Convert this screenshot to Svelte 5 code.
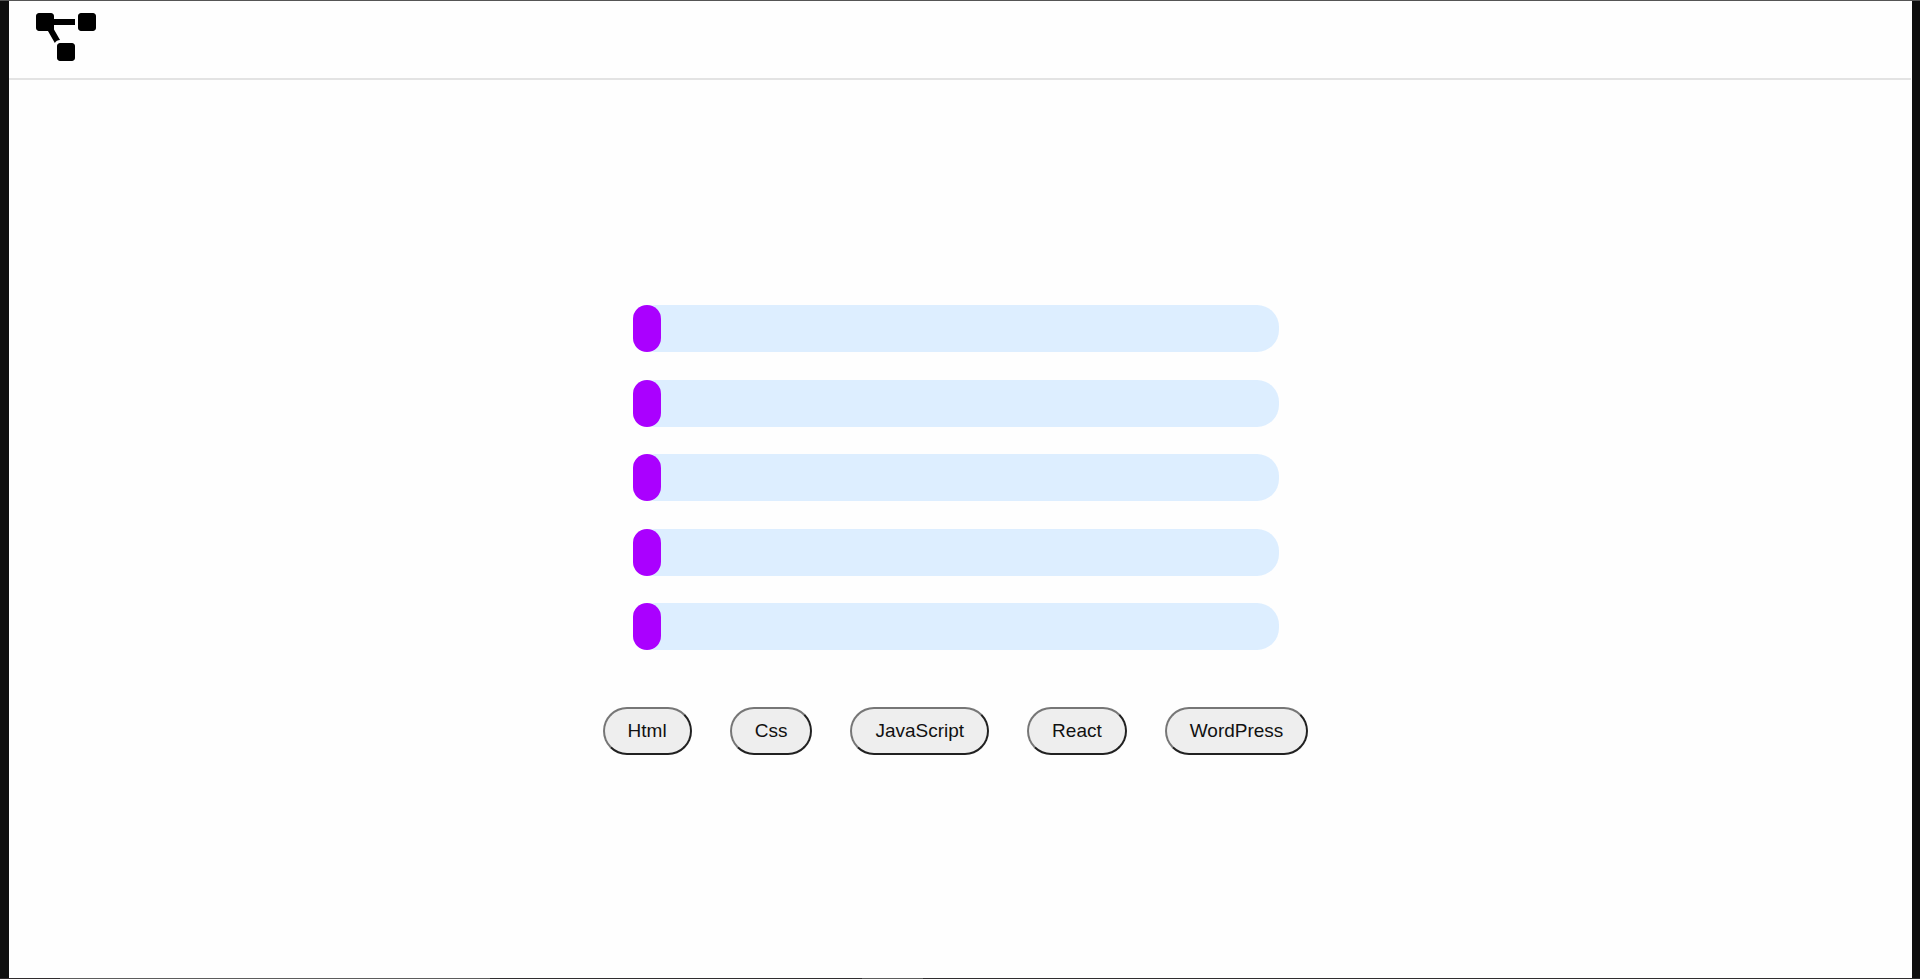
<script>
  const skills = $state([
    { name: 'Html', level: 0 },
    { name: 'Css', level: 0 },
    { name: 'JavaScript', level: 0 },
    { name: 'React', level: 0 },
    { name: 'WordPress', level: 0 }
  ]);

  function advance(skill) {
    skill.level = skill.level >= 100 ? 0 : skill.level + 20;
  }
</script>

<div class="page">
  <header>
    <a class="logo" href="/" aria-label="Home">
      <svg viewBox="0 0 640 512" aria-hidden="true">
        <path d="M384 320H256c-17.67 0-32 14.33-32 32v128c0 17.67 14.33 32 32 32h128c17.67 0 32-14.33 32-32V352c0-17.67-14.33-32-32-32zM192 32c0-17.67-14.33-32-32-32H32C14.33 0 0 14.33 0 32v128c0 17.67 14.33 32 32 32h95.72l73.16 128.04C211.98 300.98 232.4 288 256 288h.28L192 175.51V128h224V64H192V32zM608 0H480c-17.67 0-32 14.33-32 32v128c0 17.67 14.33 32 32 32h128c17.67 0 32-14.33 32-32V32c0-17.67-14.33-32-32-32z" />
      </svg>
    </a>
  </header>

  <main>
    <div class="bars">
      {#each skills as skill}
        <div
          class="track"
          role="progressbar"
          aria-label={skill.name}
          aria-valuemin="0"
          aria-valuemax="100"
          aria-valuenow={skill.level}
        >
          <div class="fill" style="width: {skill.level}%"></div>
        </div>
      {/each}
    </div>

    <div class="buttons">
      {#each skills as skill}
        <button type="button" onclick={() => advance(skill)}>{skill.name}</button>
      {/each}
    </div>
  </main>
</div>

<style>
  :global(body) {
    background: #fefefe;
  }

  .page {
    box-sizing: border-box;
    min-height: 100vh;
    display: flex;
    flex-direction: column;
    padding: 1px 8px 1px 9px;
    background:
      linear-gradient(#555, #555) top / 100% 1px no-repeat,
      linear-gradient(90deg, #2f2b2d 60px, #5b5b5b 60px 490px, #2f2d2f 490px 862px, #5b5b5b 862px 923px, #2f2d2f 923px) bottom / 100% 1px no-repeat,
      linear-gradient(#0f0f0f, #0f0f0f) left / 9px 100% no-repeat,
      linear-gradient(#0f0f0f, #0f0f0f) right / 8px 100% no-repeat,
      #fefefe;
    font-family: "Liberation Sans", Arial, sans-serif;
  }

  header {
    padding: 12px 27px 17px;
    margin-right: 1px;
    border-bottom: 2px solid #e3e3e3;
  }

  .logo {
    display: block;
    width: 60px;
    height: 48px;
    color: #000;
  }

  .logo svg {
    display: block;
    width: 100%;
    height: 100%;
    fill: currentColor;
  }

  main {
    flex: 1;
    display: flex;
    flex-direction: column;
    align-items: center;
    justify-content: center;
    gap: 57px;
    padding: 2px 10px 0 0;
  }

  .bars {
    width: 646px;
    max-width: 100%;
    height: 345px;
    display: flex;
    flex-direction: column;
    justify-content: space-between;
  }

  .track {
    height: 47px;
    border-radius: 22px;
    background: #ddeeff;
  }

  .fill {
    min-width: 28px;
    height: 100%;
    border-radius: 14px;
    background: #aa00ff;
    transition: width 0.4s;
  }

  .buttons {
    display: flex;
    flex-wrap: wrap;
    justify-content: center;
    gap: 38px;
  }

  button {
    padding: 11px 23px;
    border: 2px solid;
    border-color: #767676 #212121 #212121 #767676;
    border-radius: 24px;
    background: #eeeeee;
    color: #111;
    font-family: inherit;
    font-size: 19px;
    line-height: 22px;
    cursor: pointer;
  }
</style>
